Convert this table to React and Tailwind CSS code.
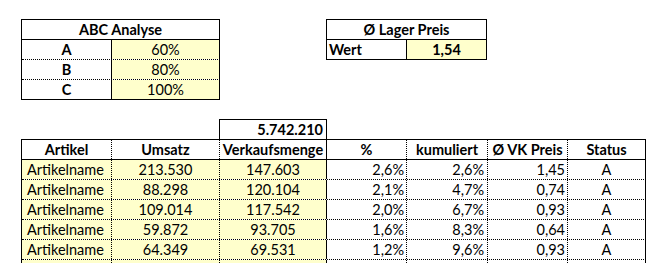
const abc = [
  { k: "A", v: "60%" },
  { k: "B", v: "80%" },
  { k: "C", v: "100%" },
];

const rows = [
  ["Artikelname", "213.530", "147.603", "2,6%", "2,6%", "1,45", "A"],
  ["Artikelname", "88.298", "120.104", "2,1%", "4,7%", "0,74", "A"],
  ["Artikelname", "109.014", "117.542", "2,0%", "6,7%", "0,93", "A"],
  ["Artikelname", "59.872", "93.705", "1,6%", "8,3%", "0,64", "A"],
  ["Artikelname", "64.349", "69.531", "1,2%", "9,6%", "0,93", "A"],
  ["", "", "", "", "", "", ""],
];

const headers = ["Artikel", "Umsatz", "Verkaufsmenge", "%", "kumuliert", "Ø VK Preis", "Status"];

// width incl. right border, from the sheet's gridlines
const colW = ["w-[90px]", "w-[108px]", "w-[107px]", "w-[80px]", "w-[81px]", "w-[80px]", "w-[78px]"];
const colR = [
  "border-r border-dotted",
  "border-r border-dotted",
  "border-r border-solid",
  "border-r border-dotted",
  "border-r border-dotted",
  "border-r border-dotted",
  "border-r border-solid",
];
const align = [
  "justify-start pl-[5px]",
  "justify-center",
  "justify-center",
  "justify-end pr-[2px]",
  "justify-end pr-[3px]",
  "justify-end pr-[2px]",
  "justify-center",
];
const fill = ["bg-[#ffffcc]", "bg-[#ffffcc]", "bg-[#ffffcc]", "", "", "", ""];

export default function App() {
  return (
    <div
      className="w-[650px] h-[263px] overflow-hidden bg-white text-black text-[14.5px] leading-[19px]"
      style={{ fontFamily: "Lato, 'Open Sans', sans-serif" }}
    >
      <div className="flex items-start pt-[19px] pl-[21px]">
        {/* ABC Analyse */}
        <div className="w-[199px] border-l border-t border-black">
          <div className="h-[20px] border-r border-b border-black flex items-center justify-center font-bold">
            ABC Analyse
          </div>
          {abc.map((r, i) => (
            <div key={r.k} className={`flex h-[20px] border-b border-black ${i < 2 ? "border-dotted" : "border-solid"}`}>
              <div className="w-[90px] border-r border-black flex items-center justify-center font-bold">{r.k}</div>
              <div className="w-[108px] border-r border-black bg-[#ffffcc] flex items-center justify-center">{r.v}</div>
            </div>
          ))}
        </div>

        {/* Lager Preis */}
        <div className="ml-[106px] w-[161px] border-l border-t border-black">
          <div className="h-[20px] border-r border-b border-black flex items-center justify-center font-bold">
            Ø Lager Preis
          </div>
          <div className="flex h-[20px] border-b border-black">
            <div className="w-[80px] border-r border-black flex items-center pl-[2px] font-bold">Wert</div>
            <div className="w-[80px] border-r border-black bg-[#ffffcc] flex items-center justify-center font-bold">1,54</div>
          </div>
        </div>
      </div>

      {/* sum above Verkaufsmenge */}
      <div className="mt-[19px] ml-[219px] w-[108px] h-[20px] border-l border-t border-r border-black flex items-center justify-end pr-[3px] font-bold">
        5.742.210
      </div>

      <div className="ml-[21px] w-[625px] border-l border-t border-black">
        <div className="flex h-[20px] border-b border-black">
          {headers.map((h, i) => (
            <div key={h} className={`${colW[i]} ${colR[i]} border-black flex items-center justify-center font-bold`}>
              {h}
            </div>
          ))}
        </div>
        {rows.map((r, ri) => (
          <div key={ri} className="flex h-[20px] border-b border-dotted border-black">
            {r.map((c, i) => (
              <div key={i} className={`${colW[i]} ${colR[i]} ${align[i]} ${fill[i]} border-black flex items-center`}>
                {c}
              </div>
            ))}
          </div>
        ))}
      </div>
    </div>
  );
}
